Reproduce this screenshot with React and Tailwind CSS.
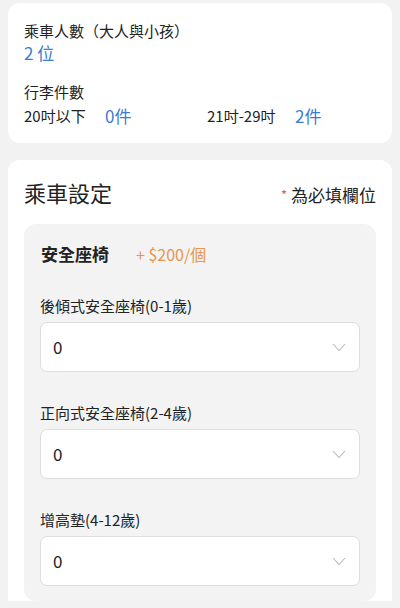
import React from "react";

const FONT = { fontFamily: '"Noto Sans CJK TC", "Noto Sans", sans-serif' };

function Chevron() {
  return (
    <svg width="14" height="9" viewBox="0 0 14 9" fill="none" className="shrink-0">
      <path d="M1 1l6 6.5L13 1" stroke="#b8b8b8" strokeWidth="1.1" />
    </svg>
  );
}

function SeatSelect({ label, value }) {
  return (
    <div className="flex flex-col">
      <div className="text-[15px] leading-[22px] text-[#222]">{label}</div>
      <div className="mt-[5px] h-[50px] bg-white border border-[#dedede] rounded-[7px] flex items-center justify-between pl-[12px] pr-[13px]">
        <span className="text-[17px] text-[#222]">{value}</span>
        <Chevron />
      </div>
    </div>
  );
}

export default function App() {
  return (
    <div className="min-h-[608px] bg-[#f2f2f2] px-[8px] pt-[3px] overflow-hidden" style={FONT}>
      {/* 乘客資訊 */}
      <div className="bg-white rounded-[12px] px-[16px] pt-[17px] pb-[15px]">
        <div className="text-[15px] leading-[22px] text-[#222]">乘車人數（大人與小孩）</div>
        <div className="text-[17px] leading-[22px] text-[#3b7bd4]">2 位</div>
        <div className="text-[15px] leading-[22px] text-[#222] mt-[17px]">行李件數</div>
        <div className="flex items-center mt-[1px]">
          <span className="text-[15px] leading-[24px] text-[#222] w-[81px]">20吋以下</span>
          <span className="text-[17px] leading-[24px] text-[#3b7bd4] w-[102px]">0件</span>
          <span className="text-[15px] leading-[24px] text-[#222] w-[88px]">21吋-29吋</span>
          <span className="text-[17px] leading-[24px] text-[#3b7bd4]">2件</span>
        </div>
      </div>

      {/* 乘車設定 */}
      <div className="bg-white rounded-t-[12px] mt-[17px] px-[16px] pt-[16px]">
        <div className="flex items-end justify-between">
          <span className="text-[22px] leading-[32px] text-[#222]">乘車設定</span>
          <span className="text-[17px] leading-[26px] text-[#222]">
            <span className="text-[#e05555] text-[13px] align-top mr-[4px]">*</span>為必填欄位
          </span>
        </div>
        <div className="mt-[16px] bg-[#f3f3f3] rounded-[12px] px-[16px] pt-[18px] pb-[15px] flex flex-col">
          <div className="flex items-center">
            <span className="text-[17px] leading-[24px] font-bold text-[#222] w-[96px] pl-[1px]">安全座椅</span>
            <span className="text-[16px] leading-[24px] text-[#e8964f]">+ $200/個</span>
          </div>
          <div className="mt-[29px] flex flex-col gap-[30px]">
            <SeatSelect label="後傾式安全座椅(0-1歲)" value="0" />
            <SeatSelect label="正向式安全座椅(2-4歲)" value="0" />
            <SeatSelect label="增高墊(4-12歲)" value="0" />
          </div>
        </div>
      </div>
    </div>
  );
}
